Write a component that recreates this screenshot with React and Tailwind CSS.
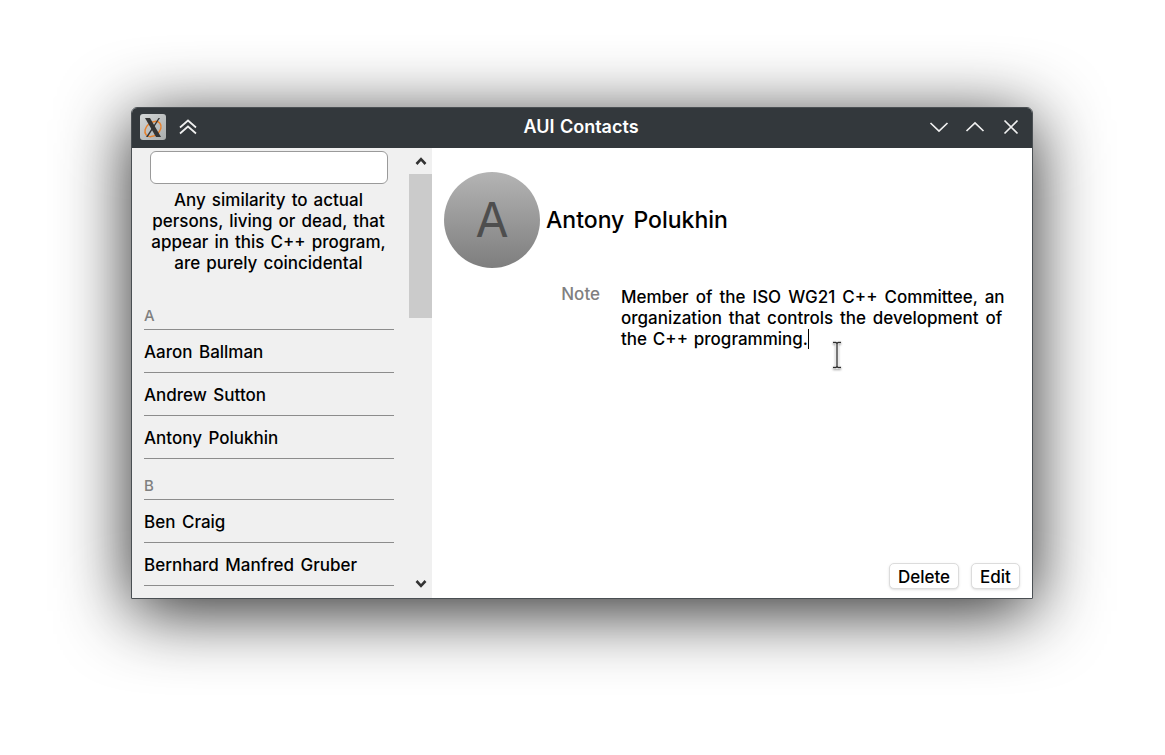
import React from 'react';

const contacts = [
  { letter: 'A', names: ['Aaron Ballman', 'Andrew Sutton', 'Antony Polukhin'] },
  { letter: 'B', names: ['Ben Craig', 'Bernhard Manfred Gruber'] },
];

const XLogo = () => (
  <div className="w-[26px] h-[26px] rounded-[3px] bg-gradient-to-br from-[#d4d6d6] to-[#a9adad] flex items-center justify-center">
    <svg width="24" height="24" viewBox="0 0 24 24" fill="none">
      <ellipse cx="12" cy="14" rx="9" ry="6.500" stroke="#e8812c" strokeWidth="1.500" transform="rotate(-40 12 14)" />
      <path d="M4 3h5l11 19h-5z" fill="#333" />
      <path d="M19 3h-1.500L5 22h1.800z" fill="#333" />
    </svg>
  </div>
);

const Chevron = ({ d, className }) => (
  <svg width="20" height="20" viewBox="0 0 20 20" fill="none" stroke="#f0f0f0" strokeWidth="1.700" className={className}>
    <path d={d} />
  </svg>
);

const TitleBar = () => (
  <div className="h-[40px] shrink-0 bg-[#33383c] pb-[2px] grid grid-cols-[1fr_auto_1fr] items-center">
    <div className="flex items-center">
      <div className="ml-[8px]"><XLogo /></div>
      <Chevron d="M2 10.500 10 3.500l8 7M2 16.500 10 9.500l8 7" className="ml-[12px]" />
    </div>
    <div className="pb-[2px] pr-[2px] text-center text-white font-semibold text-[18px] [word-spacing:1px]">AUI Contacts</div>
    <div className="flex items-center justify-end gap-[16px] mr-[11px]">
      <Chevron d="M1.500 6 10 14l8.500-8" />
      <Chevron d="M1.500 14 10 6l8.500 8" />
      <Chevron d="M3.500 3.500l13 13M16.500 3.500l-13 13" />
    </div>
  </div>
);

const Sidebar = () => (
  <div className="w-[300px] shrink-0 bg-[#f0f0f0] flex overflow-hidden">
    <div className="w-[277px] shrink-0">
      <div className="flex flex-col items-center pr-[4px]">
        <input type="text" className="mt-[3px] w-[238px] h-[33px] bg-white rounded-[6px] border border-[#9a9a9a] outline-none" />
        <p className="mt-[6px] w-[250px] text-center leading-[21px] [word-spacing:1.500px]">
          Any similarity to actual persons, living or dead, that appear in this C++ program, are purely coincidental
        </p>
      </div>
      <div className="mt-[29px] pl-[12px] pr-[15px] [word-spacing:2px]">
        {contacts.map((group) => (
          <div key={group.letter} className="mb-[14px]">
            <div className="h-[27px] pt-[3px] text-[15px] font-medium text-[#7f7f7f] leading-[20px] border-b border-[#8c8c8c]">
              {group.letter}
            </div>
            {group.names.map((name) => (
              <div key={name} className="h-[43px] pt-[3px] flex items-center border-b border-[#8c8c8c]">{name}</div>
            ))}
          </div>
        ))}
      </div>
    </div>
    <div className="w-[23px] shrink-0 flex flex-col">
      <div className="h-[26px] flex items-center justify-center">
        <svg width="12" height="10" viewBox="0 0 12 10" fill="none" stroke="#333" strokeWidth="2.600"><path d="M1.500 8 6 3.200 10.500 8" /></svg>
      </div>
      <div className="h-[144px] bg-[#cbcbcb]"></div>
      <div className="flex-1"></div>
      <div className="h-[28px] flex items-center justify-center">
        <svg width="12" height="10" viewBox="0 0 12 10" fill="none" stroke="#333" strokeWidth="2.600"><path d="M1.500 2 6 6.800 10.500 2" /></svg>
      </div>
    </div>
  </div>
);

const Detail = () => (
  <div className="flex-1 bg-white flex flex-col pl-[12px] pr-[12px]">
    <div className="mt-[24px] flex items-center">
      <div className="w-[96px] h-[96px] rounded-full bg-gradient-to-b from-[#b4b4b4] to-[#7e7e7e] flex items-center justify-center text-[#4e4e4e] text-[48px] font-normal">
        A
      </div>
      <div className="ml-[6px] text-[23px] font-medium [word-spacing:3px]">Antony Polukhin</div>
    </div>
    <div className="mt-[16px] flex">
      <div className="w-[156px] text-right text-[#808080] font-medium leading-[20px]">Note</div>
      <div className="relative ml-[21px] leading-[21px] mt-[3px] whitespace-nowrap">
        <p className="[word-spacing:2.500px]">Member of the ISO WG21 C++ Committee, an</p>
        <p className="[word-spacing:2.300px]">organization that controls the development of</p>
        <p className="[word-spacing:1.300px]">the C++ programming.<span className="border-r border-black"></span></p>
        <svg width="12" height="28" viewBox="0 0 12 28" fill="none" className="absolute left-[210px] top-[54px] drop-shadow-[0_1px_1px_rgba(0,0,0,0.35)]">
          <path d="M2 1.500h3l1 1 1-1h3M6 2.500v23M2 26.500h3l1-1 1 1h3" stroke="#ffffff" strokeWidth="3" />
          <path d="M2 1.500h3l1 1 1-1h3M6 2.500v23M2 26.500h3l1-1 1 1h3" stroke="#2b2b2b" strokeWidth="1.300" />
        </svg>
      </div>
    </div>
    <div className="mt-auto mb-[9px] flex justify-end gap-[12px]">
      <button className="h-[26px] w-[70px] pt-[1px] bg-white rounded-[5px] border border-[#dcdcdc] shadow-sm">Delete</button>
      <button className="h-[26px] w-[49px] pt-[1px] bg-white rounded-[5px] border border-[#dcdcdc] shadow-sm">Edit</button>
    </div>
  </div>
);

export default function App() {
  return (
    <div className="w-[1165px] h-[755px] bg-white pt-[107px] pl-[131px] overflow-hidden font-['Inter',sans-serif] text-[17px] font-[450] text-black [word-spacing:3px]">
      <div className="w-[902px] h-[492px] flex flex-col rounded-t-[6px] overflow-hidden border border-[#4a4f53] shadow-[0_12px_70px_rgba(0,0,0,0.85)]">
        <TitleBar />
        <div className="flex-1 flex min-h-0">
          <Sidebar />
          <Detail />
        </div>
      </div>
    </div>
  );
}
